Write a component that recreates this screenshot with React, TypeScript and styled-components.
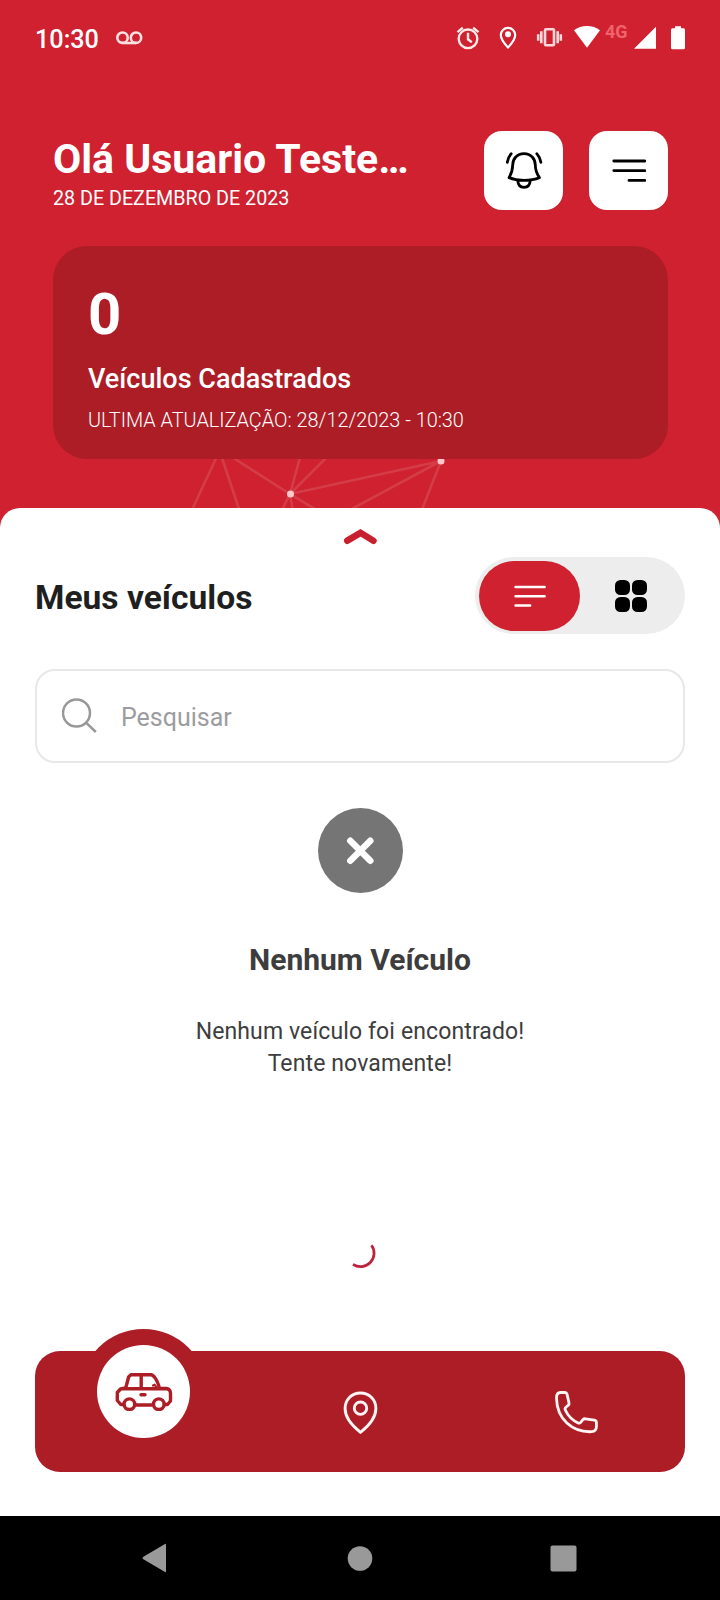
import React from "react";
import styled, { createGlobalStyle } from "styled-components";

const GlobalStyle = createGlobalStyle`
  *, *::before, *::after { box-sizing: border-box; }
  body { margin: 0; background: #fff; font-family: Roboto, "Liberation Sans", sans-serif; }
  svg { display: block; flex: none; }
  h1, h2, h3, p { margin: 0; }
  button { border: 0; padding: 0; font: inherit; }
`;

const Screen = styled.div`
  width: 720px;
  height: 1600px;
  display: flex;
  flex-direction: column;
  overflow: hidden;
`;

const Hero = styled.header`
  position: relative;
  height: 532px;
  flex: none;
  background: #cf212f;
  color: #fff;
`;

const Network = styled.svg`
  position: absolute;
  left: 0;
  top: 0;
`;

const StatusBar = styled.div`
  height: 76px;
  padding: 0 34px 0 35px;
  display: flex;
  align-items: center;
  justify-content: space-between;
`;

const Clock = styled.span`
  font-size: 25.2px;
  line-height: 30px;
  font-weight: 500;
  padding-top: 4px;
`;

const StatusGroup = styled.div`
  display: flex;
  align-items: center;
  gap: 17px;
`;

const StatusIconRow = styled.div`
  display: flex;
  align-items: flex-start;
`;

const NetworkType = styled.span`
  width: 30px;
  padding-left: 3px;
  font-size: 18px;
  line-height: 18px;
  font-weight: 700;
  color: #f0626c;
`;

const Greeting = styled.div`
  display: flex;
  align-items: flex-start;
  gap: 26px;
  padding: 55px 52px 0 53px;
`;

const GreetingText = styled.div`
  flex: 1;
  padding-top: 4px;
`;

const UserName = styled.h1`
  font-size: 41px;
  line-height: 48px;
  font-weight: 700;
  white-space: nowrap;
`;

const Today = styled.p`
  font-size: 19.7px;
  line-height: 22px;
  margin-top: 5px;
`;

const IconButton = styled.button`
  width: 79px;
  height: 79px;
  border-radius: 18px;
  background: #fff;
  display: flex;
  align-items: center;
  justify-content: center;
`;

const SummaryCard = styled.section`
  position: relative;
  margin: 36px 52px 0 53px;
  height: 213px;
  padding: 38px 35px 0;
  border-radius: 34px;
  background: #ad1d26;
`;

const Count = styled.p`
  font-size: 58px;
  line-height: 60px;
  font-weight: 700;
`;

const CountLabel = styled.p`
  margin-top: 19px;
  font-size: 27px;
  line-height: 32px;
  font-weight: 500;
`;

const Updated = styled.p`
  margin-top: 14px;
  font-size: 19.85px;
  line-height: 24px;
  font-weight: 300;
`;

const Sheet = styled.main`
  position: relative;
  flex: 1;
  margin-top: -24px;
  padding: 20px 35px 0;
  display: flex;
  flex-direction: column;
  border-radius: 20px 20px 0 0;
  background: #fff;
`;

const Handle = styled.div`
  display: flex;
  justify-content: center;
  height: 29px;
`;

const SectionHeader = styled.div`
  height: 77px;
  display: flex;
  align-items: center;
  justify-content: space-between;
`;

const SectionTitle = styled.h2`
  font-size: 33.6px;
  line-height: 40px;
  font-weight: 700;
  color: #1f1f1f;
  padding-top: 4px;
`;

const Toggle = styled.div`
  width: 210px;
  height: 77px;
  padding: 4px;
  border-radius: 39px;
  background: #ededed;
  display: flex;
`;

const ToggleOption = styled.button<{ $active?: boolean }>`
  width: 101px;
  height: 70px;
  border-radius: 35px;
  background: ${(p) => (p.$active ? "#cf212f" : "transparent")};
  display: flex;
  align-items: center;
  justify-content: center;
`;

const SearchBox = styled.label`
  margin-top: 35px;
  height: 94px;
  padding: 0 24px 0 25px;
  display: flex;
  align-items: center;
  gap: 23px;
  border: 2px solid #e8e8e8;
  border-radius: 20px;
`;

const SearchInput = styled.input`
  flex: 1;
  min-width: 0;
  border: 0;
  padding: 4px 0 0;
  outline: 0;
  background: transparent;
  font: 400 25px/32px Roboto, sans-serif;
  &::placeholder { color: #9c9ca0; opacity: 1; }
`;

const EmptyState = styled.section`
  margin-top: 45px;
  display: flex;
  flex-direction: column;
  align-items: center;
  text-align: center;
  color: #3d3d3d;
`;

const EmptyBadge = styled.div`
  width: 85px;
  height: 85px;
  border-radius: 50%;
  background: #757575;
  display: flex;
  align-items: center;
  justify-content: center;
`;

const EmptyTitle = styled.h3`
  margin-top: 49px;
  font-size: 30px;
  line-height: 36px;
  font-weight: 700;
`;

const EmptyText = styled.p`
  margin-top: 38px;
  font-size: 23px;
  line-height: 32px;
  letter-spacing: 0.12px;
`;

const Loader = styled.div`
  margin-top: 160px;
  display: flex;
  justify-content: center;
`;

const TabBar = styled.nav`
  position: relative;
  margin-top: auto;
  margin-bottom: 44px;
  height: 121px;
  border-radius: 25px;
  background: #ad1d26;
  display: grid;
  grid-template-columns: 217px 216px 217px;
`;

const Tab = styled.a`
  display: flex;
  align-items: center;
  justify-content: center;
  padding-top: 3px;
`;

/* The selected tab rises above the bar's top edge. */
const ActiveTab = styled(Tab)`
  position: absolute;
  left: 45px;
  top: -22px;
  width: 127px;
  height: 127px;
  padding: 0;
  border-radius: 50%;
  background: #ad1d26;
`;

const ActiveDisc = styled.span`
  width: 93px;
  height: 93px;
  margin-bottom: 3px;
  padding-top: 1px;
  border-radius: 50%;
  background: #fff;
  display: flex;
  align-items: center;
  justify-content: center;
`;

const SystemBar = styled.footer`
  height: 84px;
  flex: none;
  padding: 0 143px 0 142px;
  background: #000;
  display: flex;
  align-items: center;
  justify-content: space-between;
`;

const StatusIcons = () => (
  <StatusIconRow>
    <svg width="154" height="30" viewBox="448 22.700 154 30" fill="none" stroke="#fff">
      {/* alarm */}
      <g stroke="#ffe9e9" strokeWidth="2.4">
        <circle cx="468" cy="38.500" r="9.300" />
        <path d="M468 32.500v6.500l3.800 3M457.500 31.800l5.300-4.300M478.500 31.800l-5.300-4.300" />
      </g>
      {/* location */}
      <path d="M508 27.600a7.200 7.200 0 0 0-7.200 7.200c0 5 7.200 12.400 7.200 12.400s7.200-7.400 7.200-12.400a7.200 7.200 0 0 0-7.200-7.200z" strokeWidth="2.200" />
      <circle cx="508" cy="34" r="3" fill="#fff" stroke="none" />
      {/* vibrate */}
      <g stroke="#ffd9da" strokeWidth="2.600">
        <rect x="545" y="29" width="9" height="16" rx="1" />
        <path d="M541.300 31v12M557.700 31v12M538.200 34v6.500M560.800 34v6.500" />
      </g>
      {/* wifi */}
      <path d="M574 30C581 24.200 593 24.200 600 30L587 47.500z" fill="#fff" stroke="none" />
    </svg>
    <NetworkType>4G</NetworkType>
    <svg width="54" height="30" viewBox="632 22.700 54 30" fill="#fff">
      {/* signal */}
      <path d="M656 26.500v22h-22z" />
      {/* battery */}
      <path d="M675 28v-2h6v2h2.500q1.500 0 1.500 1.500v18q0 1.500-1.500 1.500h-11q-1.500 0-1.500-1.500v-18q0-1.500 1.500-1.500z" />
    </svg>
  </StatusIconRow>
);

const VoicemailIcon = () => (
  <svg width="27" height="14" viewBox="0 0 27 14" fill="none" stroke="#ffe0e1" strokeWidth="2.600">
    <circle cx="6.500" cy="6.700" r="5.200" />
    <circle cx="20" cy="6.700" r="5.200" />
    <path d="M6.500 12h13.500" />
  </svg>
);

const BellIcon = () => (
  <svg width="38" height="40" viewBox="505 151 38 40" fill="none" stroke="#000" strokeWidth="2.800" strokeLinecap="round" strokeLinejoin="round">
    <path d="M524 153.600c-7 0-11.300 5.200-11.300 11.400 0 6-1.200 8.400-3.700 12.600 4.500 1.900 9.500 2.700 15 2.700s11-.8 15.400-2.700c-2.800-4.200-4.100-6.600-4.100-12.600 0-6.200-4.300-11.400-11.300-11.400z" />
    <path d="M517.800 180.500c.2 4.400 2.600 6.800 6.200 6.800s6-2.400 6.200-6.800M511.200 153.700c-2.200 2.500-3.400 5.300-3.900 8.600M536.800 153.700c2.200 2.500 3.600 5.300 4.100 8.600" />
  </svg>
);

const MenuIcon = () => (
  <svg width="34" height="26" viewBox="0 0 34 26" fill="none" stroke="#000" strokeWidth="2.800" strokeLinecap="round">
    <path d="M1.800 3h31M1.800 12.600h31M17 22.400h15.800" />
  </svg>
);

const ListIcon = () => (
  <svg width="32" height="24" viewBox="0 0 32 24" fill="none" stroke="#fff" strokeWidth="2.600" strokeLinecap="round">
    <path d="M1.600 3h29M1.600 12.200h29M1.600 21.500h14.500" />
  </svg>
);

const GridIcon = () => (
  <svg width="32" height="32" viewBox="0 0 32 32" fill="#000">
    <rect width="15" height="15" rx="5.500" />
    <rect x="17" width="15" height="15" rx="5.500" />
    <rect y="17" width="15" height="15" rx="5.500" />
    <rect x="17" y="17" width="15" height="15" rx="5.500" />
  </svg>
);

const SearchIcon = () => (
  <svg width="36" height="36" viewBox="0 0 36 36" fill="none" stroke="#98989b" strokeWidth="2.500">
    <circle cx="14.500" cy="15" r="13.500" />
    <path d="M24.300 24.800l9.500 9.200" />
  </svg>
);

const CarIcon = () => (
  <svg width="58" height="38" viewBox="0 0 58 38" fill="none" stroke="#ad1d26" strokeWidth="3.400" strokeLinecap="round" strokeLinejoin="round">
    <path d="M8 31.500H5.800L2.300 27.500v-8L5.500 16l5.200-1 3-11.300 2.300-2h20.500l2.500 1.800c2.500 3 4.300 7 5.500 11.800l7 .2c2.500.5 4 2.500 4 5V28l-3 3.500h-2.500M21 32h15.500M8 15.800h44M26.200 2v13" />
    <circle cx="14.400" cy="31.200" r="5.300" />
    <circle cx="43.800" cy="31.200" r="5.300" />
    <path d="M26 21.700h4" />
    <path d="M38 12.500l1.500-.8 1.500 2" strokeWidth="2.200" />
  </svg>
);

const PinIcon = () => (
  <svg width="36" height="44" viewBox="0 0 36 44" fill="none" stroke="#fff5f5" strokeWidth="2.900" strokeLinejoin="round">
    <path d="M18.500 2C9.500 2 3.100 9 3.100 17.600c0 8.400 6.200 16.600 15.400 23.800 9.200-7.200 15.400-15.400 15.400-23.800C33.900 9 27.500 2 18.500 2z" />
    <circle cx="18.500" cy="17.200" r="6.200" />
  </svg>
);

const PhoneIcon = () => (
  <svg width="46" height="46" viewBox="554 1390 46 46" fill="none" stroke="#fff5f5" strokeWidth="2.800" strokeLinejoin="round">
    <path d="M560.500 1392.500h4.500q1.600 0 2 1.600l2 8.800q.4 1.500-.9 2.500l-2 1.600q-1.600 1.200-.7 3.200c2.800 6 7 10 12.700 12.700q1.500.7 2.600-.5l2.200-2.700q1-1.100 2.500-.9l9 1.400q2 .3 2 2.300v4q0 4.900-4.800 5.200c-19.500.8-34.700-12.600-35.100-33.700q0-5.500 4-5.500z" />
  </svg>
);

export default function App() {
  return (
    <>
      <GlobalStyle />
      <Screen>
        <Hero>
          <Network width="720" height="532" viewBox="0 0 720 532" fill="none" stroke="#fff" strokeOpacity=".12" strokeWidth="2.600">
            <path d="M219 452L191 512M220 452L240 512M224 452L290 494M302 450L290 494L334 450M441 461L290 494M290 494L281 512M290 494L293 512M290 494L320 512M441 461L346 512M441 461L421 512" />
            <g fill="#ffc9cc" stroke="none">
              <circle cx="290.500" cy="494" r="3.500" />
              <circle cx="441" cy="461" r="3.500" />
            </g>
          </Network>
          <StatusBar>
            <StatusGroup>
              <Clock>10:30</Clock>
              <VoicemailIcon />
            </StatusGroup>
            <StatusIcons />
          </StatusBar>
          <Greeting>
            <GreetingText>
              <UserName>Olá Usuario Teste…</UserName>
              <Today>28 DE DEZEMBRO DE 2023</Today>
            </GreetingText>
            <IconButton aria-label="Notificações">
              <BellIcon />
            </IconButton>
            <IconButton aria-label="Menu">
              <MenuIcon />
            </IconButton>
          </Greeting>
          <SummaryCard>
            <Count>0</Count>
            <CountLabel>Veículos Cadastrados</CountLabel>
            <Updated>ULTIMA ATUALIZAÇÃO: 28/12/2023 - 10:30</Updated>
          </SummaryCard>
        </Hero>
        <Sheet>
          <Handle>
            <svg width="34" height="17" viewBox="0 0 34 17" fill="none" stroke="#c8202f" strokeWidth="6.600" strokeLinecap="round">
              <path d="M4.300 12.700L17.500 4.800L30.400 12.700" />
            </svg>
          </Handle>
          <SectionHeader>
            <SectionTitle>Meus veículos</SectionTitle>
            <Toggle>
              <ToggleOption $active aria-label="Lista">
                <ListIcon />
              </ToggleOption>
              <ToggleOption aria-label="Grade">
                <GridIcon />
              </ToggleOption>
            </Toggle>
          </SectionHeader>
          <SearchBox>
            <SearchIcon />
            <SearchInput placeholder="Pesquisar" />
          </SearchBox>
          <EmptyState>
            <EmptyBadge>
              <svg width="30" height="30" viewBox="0 0 30 30" stroke="#fff" strokeWidth="6.500" strokeLinecap="round">
                <path d="M5.300 4.800L25.300 24.800M25.300 4.800L5.300 24.800" />
              </svg>
            </EmptyBadge>
            <EmptyTitle>Nenhum Veículo</EmptyTitle>
            <EmptyText>
              Nenhum veículo foi encontrado!
              <br />
              Tente novamente!
            </EmptyText>
          </EmptyState>
          <Loader>
            <svg width="32" height="30" viewBox="344 1240 32 30" fill="none" stroke="#c1203a" strokeWidth="2.700">
              <path d="M371.500 1245.200A13.500 13.500 0 0 1 353 1264.300" />
            </svg>
          </Loader>
          <TabBar>
            <ActiveTab>
              <ActiveDisc>
                <CarIcon />
              </ActiveDisc>
            </ActiveTab>
            <span />
            <Tab>
              <PinIcon />
            </Tab>
            <Tab>
              <PhoneIcon />
            </Tab>
          </TabBar>
        </Sheet>
        <SystemBar>
          <svg width="25" height="30" viewBox="0 0 25 30" fill="#999">
            <path d="M24 1.500v27q0 1-1 .5L1 16q-1-1 0-2L23 1q1-.5 1 .5z" />
          </svg>
          <svg width="25" height="25" viewBox="-1.500 0 25 25" fill="#999" overflow="visible">
            <circle cx="12.500" cy="12.500" r="12.300" />
          </svg>
          <svg width="27" height="27" viewBox="0 0 27 27" fill="#999">
            <rect x=".5" y=".5" width="26" height="26" rx="2" />
          </svg>
        </SystemBar>
      </Screen>
    </>
  );
}
